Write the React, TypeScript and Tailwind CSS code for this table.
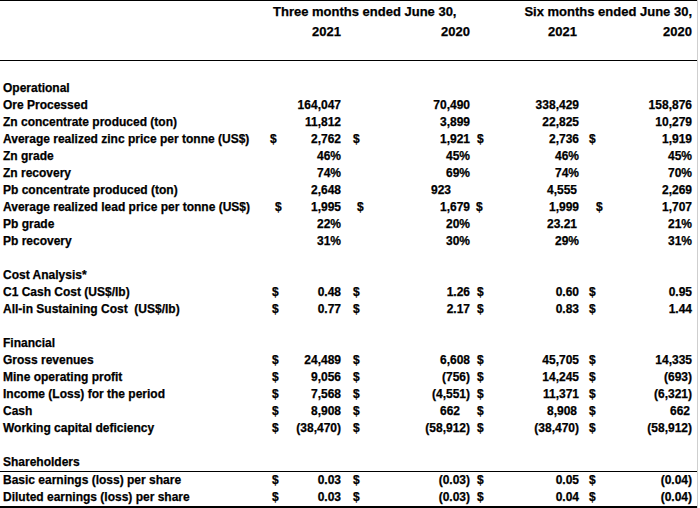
import React from "react";

type Row =
  | { kind: "blank" }
  | { kind: "section"; label: string; underline?: boolean }
  | {
      kind: "data";
      label: string;
      vals: string[];
      dollar?: boolean;
      dShift?: number[];
      pr?: number[];
    };

const rows: Row[] = [
  { kind: "section", label: "Operational" },
  { kind: "data", label: "Ore Processed", vals: ["164,047", "70,490", "338,429", "158,876"] },
  { kind: "data", label: "Zn concentrate produced (ton)", vals: ["11,812", "3,899", "22,825", "10,279"] },
  {
    kind: "data",
    label: "Average realized zinc price per tonne (US$)",
    vals: ["2,762", "1,921", "2,736", "1,919"],
    dollar: true,
    dShift: [-4, 0, 0, 0],
  },
  { kind: "data", label: "Zn grade", vals: ["46%", "45%", "46%", "45%"] },
  { kind: "data", label: "Zn recovery", vals: ["74%", "69%", "74%", "70%"] },
  {
    kind: "data",
    label: "Pb concentrate produced (ton)",
    vals: ["2,648", "923", "4,555", "2,269"],
    pr: [0, 19, 2, 0],
  },
  {
    kind: "data",
    label: "Average realized lead price per tonne (US$)",
    vals: ["1,995", "1,679", "1,999", "1,707"],
    dollar: true,
    dShift: [3, 4, -1, 7],
  },
  { kind: "data", label: "Pb grade", vals: ["22%", "20%", "23.21", "21%"], pr: [0, 0, 2, 0] },
  { kind: "data", label: "Pb recovery", vals: ["31%", "30%", "29%", "31%"] },
  { kind: "blank" },
  { kind: "section", label: "Cost Analysis*" },
  { kind: "data", label: "C1 Cash Cost (US$/lb)", vals: ["0.48", "1.26", "0.60", "0.95"], dollar: true },
  {
    kind: "data",
    label: "All-in Sustaining Cost\u00a0\u00a0(US$/lb)",
    vals: ["0.77", "2.17", "0.83", "1.44"],
    dollar: true,
  },
  { kind: "blank" },
  { kind: "section", label: "Financial" },
  { kind: "data", label: "Gross revenues", vals: ["24,489", "6,608", "45,705", "14,335"], dollar: true },
  { kind: "data", label: "Mine operating profit", vals: ["9,056", "(756)", "14,245", "(693)"], dollar: true },
  {
    kind: "data",
    label: "Income (Loss) for the period",
    vals: ["7,568", "(4,551)", "11,371", "(6,321)"],
    dollar: true,
  },
  { kind: "data", label: "Cash", vals: ["8,908", "662", "8,908", "662"], dollar: true, pr: [0, 10, 2, 2] },
  {
    kind: "data",
    label: "Working capital deficiency",
    vals: ["(38,470)", "(58,912)", "(38,470)", "(58,912)"],
    dollar: true,
  },
  { kind: "blank" },
  { kind: "section", label: "Shareholders", underline: true },
  {
    kind: "data",
    label: "Basic earnings (loss) per share",
    vals: ["0.03", "(0.03)", "0.05", "(0.04)"],
    dollar: true,
  },
  {
    kind: "data",
    label: "Diluted earnings (loss) per share",
    vals: ["0.03", "(0.03)", "0.04", "(0.04)"],
    dollar: true,
  },
];

const GRID = "grid grid-cols-[270px_20px_51px_34px_95px_20px_89px_26px_87px]";
const dollarPad = [2, 12, 7, 10];

function DataRow({ r }: { r: Extract<Row, { kind: "data" }> }) {
  const cells: React.ReactNode[] = [];
  cells.push(
    <div key="l" className="pl-[3px] whitespace-nowrap overflow-visible">
      {r.label}
    </div>
  );
  r.vals.forEach((v, i) => {
    const shift = r.dShift ? r.dShift[i] : 0;
    cells.push(
      <div key={"d" + i} className="whitespace-nowrap">
        {r.dollar ? (
          <span style={{ paddingLeft: dollarPad[i] + shift }}>$</span>
        ) : null}
      </div>
    );
    cells.push(
      <div
        key={"v" + i}
        className="text-right whitespace-nowrap"
        style={r.pr && r.pr[i] ? { paddingRight: r.pr[i] } : undefined}
      >
        {v}
      </div>
    );
  });
  return <div className={GRID + " h-[17px] leading-[17px]"}>{cells}</div>;
}

export default function App() {
  return (
    <div
      className="w-[698px] h-[508px] bg-white text-black font-bold text-[12px] border-r border-[#cfcfcf] overflow-hidden [-webkit-text-stroke:0.25px_black]"
      style={{ fontFamily: '"Liberation Sans", Arial, sans-serif' }}
    >
      <div className="w-[697px] border-t border-black" />
      <div className="h-[1px]" />
      <div className={GRID + " h-[20px] leading-[20px] text-[13px]"}>
        <div />
        <div className="col-span-4 pl-[3px] whitespace-nowrap">Three months ended June 30,</div>
        <div className="col-span-4 text-right whitespace-nowrap">Six months ended June 30,</div>
      </div>
      <div className={GRID + " h-[19px] leading-[19px] text-[13px]"}>
        <div />
        <div />
        <div className="text-right">2021</div>
        <div />
        <div className="text-right">2020</div>
        <div />
        <div className="text-right pr-[2px]">2021</div>
        <div />
        <div className="text-right">2020</div>
      </div>
      <div className="h-[19px]" />
      <div className="w-[697px] border-t border-black" />
      <div className="h-[19px]" />
      {rows.map((r, idx) => {
        if (r.kind === "blank") return <div key={idx} className="h-[17px]" />;
        if (r.kind === "section")
          return (
            <React.Fragment key={idx}>
              <div className="h-[17px] leading-[17px] pl-[3px]">{r.label}</div>
              {r.underline ? <div className="w-[697px] border-t border-black" /> : null}
            </React.Fragment>
          );
        return <DataRow key={idx} r={r} />;
      })}
      <div className="w-[697px] border-t-2 border-black" />
    </div>
  );
}
